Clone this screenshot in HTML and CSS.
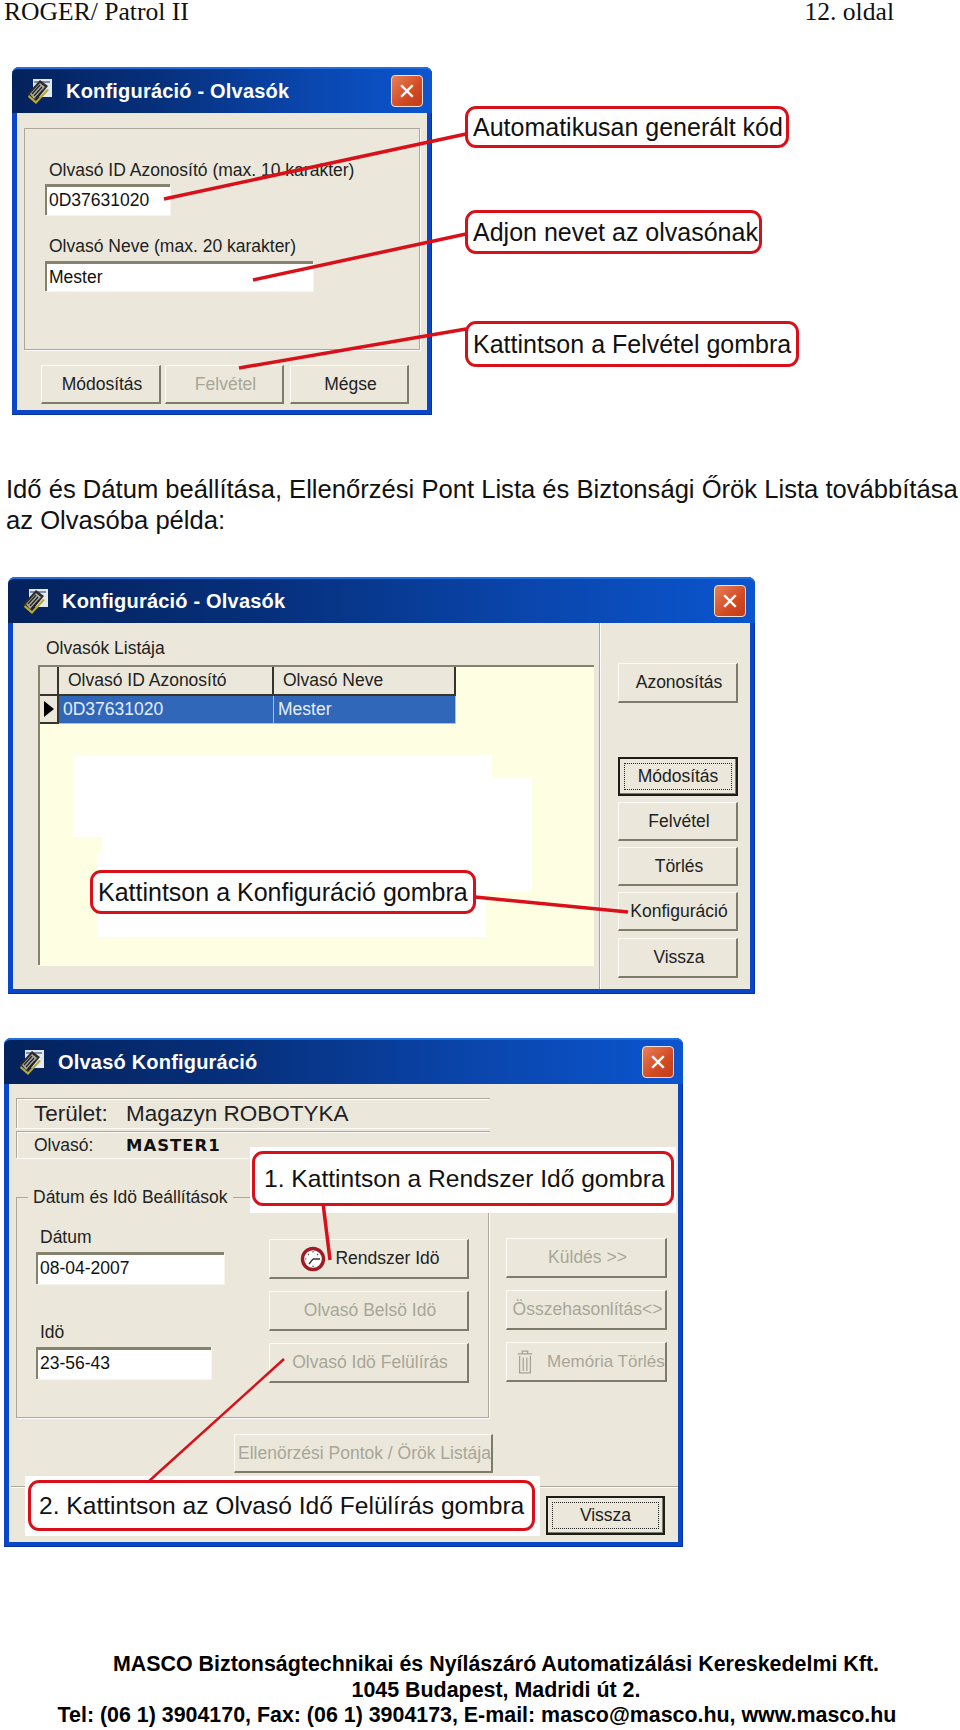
FILE: index.html
```html
<!DOCTYPE html>
<html lang="hu">
<head>
  <meta charset="UTF-8" />
  <meta name="viewport" content="width=device-width, initial-scale=1.0"/>
  <title>ROGER/ Patrol II - 12. oldal</title>
  <link rel="stylesheet" href="styles.css">
</head>
<body>
  <svg class="defs" width="0" height="0">
    <symbol id="appicon" viewBox="0 0 28 28">
      <path d="M8 2h19v18H8z" fill="#e4e8f0"/>
      <path d="M9 4h16v2H9z" fill="#7a8fb5"/>
      <path d="M2 17 15 3l8 6L10 25z" fill="#2b2b2b"/>
      <path d="M5 17 15 6l5 4L9 22z" fill="#a8a8a0"/>
      <path d="M7 17l8-9M9 19l8-9M11 21l7-8" stroke="#222" stroke-width="1.2"/>
      <path d="M3 20l8 7 13-14-2-1-11 12-7-6z" fill="#b5a83a"/>
    </symbol>
  </svg>

  <header class="pagehead">
    <span>ROGER/ Patrol II</span>
    <span class="pagenum">12. oldal</span>
  </header>

  <!-- elso ablak -->
  <section class="fig fig1">
    <div class="win win1">
      <div class="titlebar">
        <svg class="appicon"><use href="#appicon"/></svg>
        <span class="wintitle">Konfiguráció - Olvasók</span>
        <span class="close">✕</span>
      </div>
      <div class="client">
        <div class="group">
          <div class="lbl">Olvasó ID Azonosító (max. 10 karakter)</div>
          <div class="field f-id">0D37631020</div>
          <div class="lbl lbl2">Olvasó Neve (max. 20 karakter)</div>
          <div class="field f-name">Mester</div>
        </div>
        <div class="btnrow">
          <button class="btn">Módosítás</button>
          <button class="btn off">Felvétel</button>
          <button class="btn">Mégse</button>
        </div>
      </div>
    </div>
    <svg class="overlay" width="960" height="400">
      <polyline points="164,132 466,67" />
      <polyline points="253,213 466,167" />
      <polyline points="239,301 466,262" />
    </svg>
    <div class="callout c1">Automatikusan generált kód</div>
    <div class="callout c2">Adjon nevet az olvasónak</div>
    <div class="callout c3">Kattintson a Felvétel gombra</div>
  </section>

  <p class="lead">Idő és Dátum beállítása, Ellenőrzési Pont Lista és Biztonsági Őrök Lista továbbítása az Olvasóba példa:</p>

  <!-- masodik ablak -->
  <section class="fig fig2">
    <div class="win win2">
      <div class="titlebar">
        <svg class="appicon"><use href="#appicon"/></svg>
        <span class="wintitle">Konfiguráció - Olvasók</span>
        <span class="close">✕</span>
      </div>
      <div class="client split">
        <div class="listpanel">
          <div class="lbl">Olvasók Listája</div>
          <div class="gridbox">
            <div class="grid-row grid-head">
              <div class="cell"></div>
              <div class="cell">Olvasó ID Azonosító</div>
              <div class="cell">Olvasó Neve</div>
            </div>
            <div class="grid-row grid-sel">
              <div class="cell rowhead"><span class="arrow"></span></div>
              <div class="cell">0D37631020</div>
              <div class="cell">Mester</div>
            </div>
          </div>
        </div>
        <div class="sidebtns">
          <button class="btn first">Azonosítás</button>
          <button class="btn default"><span class="focus">Módosítás</span></button>
          <button class="btn">Felvétel</button>
          <button class="btn">Törlés</button>
          <button class="btn">Konfiguráció</button>
          <button class="btn last">Vissza</button>
        </div>
      </div>
    </div>
    <svg class="overlay" width="960" height="420">
      <polygon class="patch" points="73,178 492,178 492,201 532,201 532,315 486,315 486,360 97,360 97,276 102,276 102,260 73,260" />
      <polyline points="475,320 628,335" />
    </svg>
    <div class="callout c4">Kattintson a Konfiguráció gombra</div>
  </section>

  <!-- harmadik ablak -->
  <section class="fig fig3">
    <div class="win win3">
      <div class="titlebar">
        <svg class="appicon"><use href="#appicon"/></svg>
        <span class="wintitle">Olvasó Konfiguráció</span>
        <span class="close">✕</span>
      </div>
      <div class="client">
        <div class="inforow big"><span class="infokey">Terület:</span><span>Magazyn ROBOTYKA</span></div>
        <div class="inforow"><span class="infokey">Olvasó:</span><b class="master">MASTER1</b></div>
        <div class="settings">
          <div class="group dtgroup">
            <span class="legend">Dátum és Idö Beállítások</span>
            <div class="dtcol">
              <div class="lbl">Dátum</div>
              <div class="field f-date">08-04-2007</div>
              <div class="lbl lbl3">Idö</div>
              <div class="field f-time">23-56-43</div>
            </div>
            <div class="btncol">
              <button class="btn">
                <svg class="clock" viewBox="0 0 26 26">
                  <circle cx="13" cy="13" r="10.5" fill="#fff" stroke="#a01c24" stroke-width="3.4"/>
                  <path d="M13 13l7 0M13 13l-4 5" stroke="#333" stroke-width="1.3" fill="none"/>
                  <path d="M13 5v1.5M13 19.5V21M5 13h1.5M8 8l1 1M18 8l-1 1" stroke="#555" stroke-width="1.2"/>
                </svg>
                Rendszer Idö
              </button>
              <button class="btn off">Olvasó Belsö Idö</button>
              <button class="btn off">Olvasó Idö Felülírás</button>
            </div>
          </div>
          <div class="btncol sendcol">
            <button class="btn off">Küldés &gt;&gt;</button>
            <button class="btn off">Összehasonlítás&lt;&gt;</button>
            <button class="btn off trashbtn">
              <svg class="trash" viewBox="0 0 20 28">
                <path d="M2 5h16M7 5V2h6v3M4 7v19h12V7M8 9v15M12 9v15" fill="none" stroke="#a5a393" stroke-width="1.4"/>
              </svg>
              Memória Törlés
            </button>
          </div>
        </div>
        <button class="btn checkbtn off">Ellenörzési Pontok / Örök Listája</button>
        <div class="bottombar">
          <button class="btn default closebtn"><span class="focus">Vissza</span></button>
        </div>
      </div>
    </div>
    <svg class="overlay" width="960" height="520">
      <rect class="patch" x="25" y="438" width="515" height="60" />
      <rect class="patch" x="250" y="109" width="426" height="66" />
      <polyline points="323,165 330,222" />
      <polyline class="thin" points="284,321 148,444" />
    </svg>
    <div class="callout c5">1. Kattintson a Rendszer Idő gombra</div>
    <div class="callout c6">2. Kattintson az Olvasó Idő Felülírás gombra</div>
  </section>

  <footer class="pagefoot">
    <div class="footline">MASCO Biztonságtechnikai és Nyílászáró Automatizálási Kereskedelmi Kft.</div>
    <div class="footline">1045 Budapest, Madridi út 2.</div>
    <div>Tel: (06 1) 3904170, Fax: (06 1) 3904173, E-mail: masco@masco.hu, www.masco.hu</div>
  </footer>
</body>
</html>
```
FILE: styles.css
```css
* { box-sizing: border-box; }
body {
  margin: 0;
  width: 960px;
  height: 1730px;
  overflow: hidden;
  background: #fff;
  color: #111;
  font-family: 'Liberation Sans', Arial, sans-serif;
}
.defs { position: absolute; }

.pagehead {
  display: flex;
  justify-content: space-between;
  padding: 0 66px 0 4px;
  height: 24px;
  font-family: 'Liberation Serif', serif;
  font-size: 25.6px;
  line-height: 23px;
}
.lead {
  margin: 7px 0 0;
  padding: 0 0 0 6px;
  width: 960px;
  font-size: 25.6px;
  line-height: 30.5px;
}
.pagefoot {
  width: 954px;
  margin-top: 105px;
  text-align: center;
  font-weight: bold;
  font-size: 21.4px;
  line-height: 25.5px;
  color: #000;
}
.footline { padding-left: 38px; }

/* ablakok */
.fig { position: relative; }
.fig1 { margin-top: 43px; padding-left: 12px; height: 400px; }
.fig2 { margin-top: 42px; padding-left: 8px; height: 417px; }
.fig3 { margin-top: 44px; padding-left: 4px; height: 509px; }

.win {
  display: flex;
  flex-direction: column;
  padding: 0 5px 5px;
  background: #0a46c8;
  border-radius: 7px 7px 0 0;
  box-shadow: inset 0 -1px 0 #0432a0, inset -1px 0 0 #0432a0;
  font-family: 'Liberation Sans', Arial, sans-serif;
}
.win1 { width: 420px; height: 348px; }
.win2 { width: 747px; height: 417px; }
.win3 { width: 679px; height: 509px; }

.titlebar {
  display: flex;
  align-items: center;
  flex: none;
  height: 46px;
  margin: 0 -5px;
  padding: 0 9px 0 13px;
  border-radius: 7px 7px 0 0;
  border-top: 2px solid #1f6fe0;
  background: linear-gradient(90deg, #04225c 0%, #06307c 35%, #0a46ad 70%, #0b55cf 100%);
  color: #fff;
}
.appicon { width: 28px; height: 28px; flex: none; }
.wintitle {
  flex: 1;
  margin-left: 13px;
  font-weight: bold;
  font-size: 20px;
  letter-spacing: .2px;
}
.close {
  width: 32px;
  height: 32px;
  display: flex;
  align-items: center;
  justify-content: center;
  border: 1.5px solid #f2e4dc;
  border-radius: 4px;
  background: linear-gradient(135deg, #e8805a, #d24a22 60%, #c23c1a);
  color: #fff;
  font-size: 22px;
  font-weight: bold;
  font-family: 'DejaVu Sans', sans-serif;
}
.client {
  flex: 1;
  background: #ebe8db;
  font-size: 17.5px;
  color: #222;
}
.lbl { line-height: 27px; height: 27px; margin-left: 4px; }

.group {
  position: relative;
  border: 1px solid #aca899;
  box-shadow: 1px 1px 0 #fff;
}
.field {
  height: 31px;
  padding-left: 2px;
  background: #fff;
  border-top: 3px solid #85826f;
  border-left: 2px solid #85826f;
  box-shadow: 1px 1px 0 #f6f4ec;
  line-height: 27px;
  color: #111;
}

.btn {
  display: block;
  height: 39px;
  padding: 0 0 0 3px;
  border: 0;
  border-top: 1px solid #fbfaf4;
  border-left: 1px solid #fbfaf4;
  border-right: 2px solid #7d7b6a;
  border-bottom: 2px solid #7d7b6a;
  background: #ebe8db;
  color: #222;
  font-family: inherit;
  font-size: 17.5px;
  white-space: nowrap;
}
.btn.off { color: #a8a698; }
.btn.default {
  border: 2px solid #1d1d18;
  padding: 4px;
  box-shadow: inset -1px -1px 0 #7d7b6a;
}
.focus {
  display: flex;
  align-items: center;
  justify-content: center;
  height: 100%;
  border: 1px dotted #222;
}

/* elso ablak */
.win1 .client { padding: 15px 7px 6px 7px; }
.win1 .group { height: 222px; padding: 28px 20px 0; }
.lbl2 { margin-top: 16px; height: 30px; line-height: 30px; }
.f-id { width: 125px; }
.f-name { width: 268px; height: 30px; }
.btnrow { display: flex; gap: 4px; margin: 15px 0 0 17px; }
.btnrow .btn { width: 120px; }
.btnrow .btn:nth-child(2) { width: 119px; }
.btnrow .btn:nth-child(3) { width: 119px; margin-left: 2px; }

/* masodik ablak */
.split { display: flex; }
.listpanel {
  width: 587px;
  padding: 12px 0 0 25px;
  border-right: 1px solid #aca899;
  box-shadow: 1px 0 0 #fff;
}
.listpanel .lbl { margin-left: 8px; height: 30px; }
.gridbox {
  width: 556px;
  height: 300px;
  background: #fefee3;
  border-top: 2px solid #85826f;
  border-left: 2px solid #85826f;
  box-shadow: 0 1px 0 #fff;
}
.grid-row { display: grid; grid-template-columns: 19px 215px 182px; width: 416px; }
.grid-head { height: 29px; }
.grid-head .cell {
  background: #ebe8db;
  border-right: 2px solid #35352c;
  border-bottom: 2px solid #35352c;
  line-height: 27px;
  padding-left: 9px;
  color: #222;
}
.grid-sel { height: 28px; background: #3067b8; color: #e8eef8; line-height: 26px; }
.grid-sel .cell { padding-left: 4px; border-right: 1px solid #a8c0e4; border-bottom: 1px solid #a8c0e4; }
.grid-sel .rowhead {
  display: flex;
  align-items: center;
  padding-left: 4px;
  background: #ebe8db;
  border-right: 2px solid #35352c;
  border-bottom: 2px solid #35352c;
}
.arrow {
  width: 0;
  height: 0;
  border-top: 8px solid transparent;
  border-bottom: 8px solid transparent;
  border-left: 10px solid #000;
}
.sidebtns { display: flex; flex-direction: column; gap: 6px; padding: 40px 0 0 18px; }
.sidebtns .btn { width: 120px; }
.sidebtns .first { height: 40px; margin-bottom: 48px; }
.sidebtns .last { height: 40px; margin-top: 1px; }

/* harmadik ablak */
.win3 .client { padding: 14px 7px 0 2px; display: flex; flex-direction: column; }
.inforow {
  display: flex;
  width: 474px;
  height: 27px;
  margin: 3px 0 0 5px;
  padding-left: 17px;
  align-items: center;
  border-top: 1px solid #aca899;
  border-left: 1px solid #aca899;
  box-shadow: 0 1px 0 #fbfaf4, inset 1px 1px 0 #fbfaf4;
}
.inforow.big { height: 30px; margin-top: 0; font-size: 22.5px; }
.infokey { width: 92px; flex: none; }
.master { font-family: 'DejaVu Sans', sans-serif; font-size: 16.5px; letter-spacing: 1px; color: #111; }
.settings { display: flex; margin: 39px 0 0 5px; }
.dtgroup { display: flex; width: 473px; height: 221px; flex: none; }
.legend {
  position: absolute;
  top: -14px;
  left: 11px;
  padding: 0 5px;
  height: 27px;
  line-height: 27px;
  background: #ebe8db;
}
.dtcol { width: 252px; padding: 32px 0 0 19px; }
.dtcol .lbl { margin-left: 4px; height: 14px; line-height: 14px; }
.dtcol .field { margin-top: 8px; height: 32px; }
.f-date { width: 188px; }
.f-time { width: 175px; }
.dtcol .lbl3 { margin-top: 41px; }
.btncol { display: flex; flex-direction: column; gap: 12px; padding-top: 41px; }
.btncol .btn { width: 200px; height: 40px; display: flex; align-items: center; justify-content: center; gap: 9px; }
.sendcol { padding: 41px 0 0 17px; }
.sendcol .btn { width: 161px; }
.clock { width: 26px; height: 26px; flex: none; }
.trash { width: 18px; height: 26px; flex: none; }
.btncol .trashbtn { gap: 13px; justify-content: flex-start; padding-left: 9px; font-size: 17px; }
.checkbtn { width: 259px; height: 39px; margin: 16px 0 0 223px; flex: none; }
.bottombar {
  display: flex;
  justify-content: flex-end;
  flex: 1;
  margin: 13px -7px 0 0;
  padding: 9px 13px 0 0;
  border-top: 1px solid #aca899;
  box-shadow: inset 0 1px 0 #fff;
}
.closebtn { width: 119px; height: 39px; }

/* jelolesek a kepek folott */
.overlay { position: absolute; left: 0; top: 0; overflow: visible; pointer-events: none; }
.overlay polyline { fill: none; stroke: #d9101a; stroke-width: 3.5; }
.overlay polyline.thin { stroke-width: 2.5; }
.patch { fill: #fff; }
.callout {
  position: absolute;
  display: flex;
  align-items: center;
  padding-left: 5px;
  background: #fff;
  border: 3px solid #d9101a;
  border-radius: 11px;
  font-size: 25px;
  color: #111;
  white-space: nowrap;
}
.c1 { left: 465px; top: 39px; width: 324px; height: 42px; }
.c2 { left: 465px; top: 143px; width: 297px; height: 44px; }
.c3 { left: 465px; top: 254px; width: 334px; height: 46px; }
.c4 { left: 90px; top: 293px; width: 386px; height: 44px; }
.c5 { left: 252px; top: 113px; width: 422px; height: 55px; font-size: 24.6px; padding-left: 9px; }
.c6 { left: 28px; top: 442px; width: 507px; height: 51px; font-size: 24.6px; padding-left: 8px; }
```
